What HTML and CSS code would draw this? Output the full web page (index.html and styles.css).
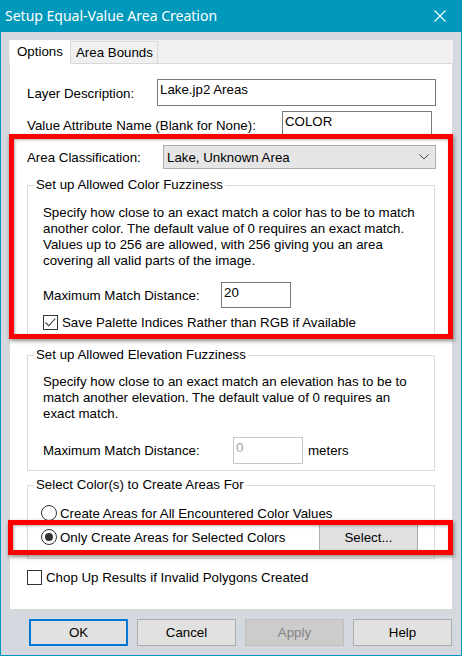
FILE: index.html
```html
<!DOCTYPE html>
<html>
<head>
<meta charset="utf-8">
<title>Setup Equal-Value Area Creation</title>
<link rel="stylesheet" href="styles.css">
</head>
<body>
<div class="window">
  <div class="titlebar">
    <span class="title">Setup Equal-Value Area Creation</span>
    <svg class="close" width="12" height="12" viewBox="0 0 12 12"><path d="M0.5 0.5 L11.5 11.5 M11.5 0.5 L0.5 11.5" stroke="#fff" stroke-width="1.1" fill="none"/></svg>
  </div>
  <div class="client">
    <div class="tabctl">
      <div class="tabs">
        <div class="tab active">Options</div>
        <div class="tab">Area Bounds</div>
      </div>
      <div class="panel">
        <div class="row r1"><span class="lbl l1">Layer Description:</span><div class="field f1">Lake.jp2 Areas</div></div>
        <div class="row r2"><span class="lbl l2">Value Attribute Name (Blank for None):</span><div class="field f2">COLOR</div></div>
        <div class="row r3"><span class="lbl l3">Area Classification:</span>
          <div class="combo"><span>Lake, Unknown Area</span>
            <svg class="chev" width="10" height="6" viewBox="0 0 10 6"><path d="M0.5 0.5 L5 5 L9.5 0.5" stroke="#444" stroke-width="1" fill="none"/></svg>
          </div>
        </div>

        <fieldset class="grp g1">
          <legend>Set up Allowed Color Fuzziness</legend>
          <div class="gbody b1">
            <p class="desc">Specify how close to an exact match a color has to be to match<br>another color. The default value of 0 requires an exact match.<br>Values up to 256 are allowed, with 256 giving you an area<br>covering all valid parts of the image.</p>
            <div class="mmrow mm1"><span class="mmlbl ml1">Maximum Match Distance:</span><div class="field fm1">20</div></div>
            <div class="chkrow c1">
              <svg class="chk" width="15" height="15" viewBox="0 0 15 15"><rect x="0.5" y="0.5" width="14" height="14" fill="#fff" stroke="#333"/><path d="M2.5 7.5 L5.8 10.8 L12.3 3.5" stroke="#333" stroke-width="1.1" fill="none"/></svg>
              <span>Save Palette Indices Rather than RGB if Available</span>
            </div>
          </div>
        </fieldset>

        <fieldset class="grp g2">
          <legend>Set up Allowed Elevation Fuzziness</legend>
          <div class="gbody b2">
            <p class="desc">Specify how close to an exact match an elevation has to be to<br>match another elevation. The default value of 0 requires an<br>exact match.</p>
            <div class="mmrow mm2"><span class="mmlbl ml2">Maximum Match Distance:</span><div class="field fm2 disabled">0</div><span class="unit">meters</span></div>
          </div>
        </fieldset>

        <fieldset class="grp g3">
          <legend>Select Color(s) to Create Areas For</legend>
          <div class="gbody b3">
            <div class="radrow rr1">
              <svg class="rad" width="16" height="16" viewBox="0 0 16 16"><circle cx="8" cy="8" r="7.5" fill="#fff" stroke="#333"/></svg>
              <span>Create Areas for All Encountered Color Values</span>
            </div>
            <div class="radrow rr2">
              <svg class="rad" width="16" height="16" viewBox="0 0 16 16"><circle cx="8" cy="8" r="7.5" fill="#fff" stroke="#333"/><circle cx="8" cy="8" r="4" fill="#333"/></svg>
              <span>Only Create Areas for Selected Colors</span>
              <div class="btn selbtn">Select...</div>
            </div>
          </div>
        </fieldset>

        <div class="chkrow c2">
          <svg class="chk" width="15" height="15" viewBox="0 0 15 15"><rect x="0.5" y="0.5" width="14" height="14" fill="#fff" stroke="#333"/></svg>
          <span>Chop Up Results if Invalid Polygons Created</span>
        </div>
      </div>
    </div>
    <div class="buttons">
      <div class="btn default">OK</div>
      <div class="btn">Cancel</div>
      <div class="btn disabled">Apply</div>
      <div class="btn">Help</div>
    </div>
  </div>
  <div class="mark m1"></div>
  <div class="mark m2"></div>
</div>
</body>
</html>
```

FILE: styles.css
```css
* { box-sizing: border-box; }
html, body { margin: 0; padding: 0; }
body {
  width: 462px;
  height: 656px;
  overflow: hidden;
  font-family: "Liberation Sans", Arial, sans-serif;
  font-size: 13.3px;
  color: #000;
  background: #d4d8df;
}
.window {
  position: relative;
  width: 462px;
  height: 656px;
  border: 1px solid #0099bc;
  border-top: 0;
  background: #d4d8df;
  display: flex;
  flex-direction: column;
}
.titlebar {
  height: 32px;
  flex: none;
  background: #0099bc;
  color: #fff;
  display: flex;
  align-items: center;
  justify-content: space-between;
  padding: 0 15px 0 4px;
  font-family: "Noto Sans", "Open Sans", sans-serif;
  font-size: 14px;
}
.title { line-height: 20px; }
.close { display: block; }
.client {
  flex: 1;
  display: flex;
  flex-direction: column;
  padding: 8px 8px 9px 8px;
}
.tabctl {
  height: 570px;
  flex: none;
  background: #f0f0f0;
  display: flex;
  flex-direction: column;
}
.tabs {
  height: 23px;
  flex: none;
  display: flex;
  align-items: flex-end;
  padding-left: 1px;
}
.tab {
  height: 22px;
  padding: 0 4px 0 5px;
  border: 1px solid #d9d9d9;
  border-bottom: 0;
  background: #f0f0f0;
  display: flex;
  align-items: center;
  line-height: 15px;
}
.tab.active {
  height: 24px;
  width: 60px;
  padding: 0 0 2px 7px;
  border: 0;
  background: #fff;
  margin-bottom: -1px;
  position: relative;
  z-index: 1;
}
.panel {
  flex: 1;
  background: #fff;
  border: 1px solid #d9d9d9;
  padding-top: 15px;
}
.row {
  display: flex;
  align-items: center;
  padding-left: 17px;
}
.lbl { flex: none; line-height: 15px; padding-top: 1px; }
.l1 { width: 130px; }
.l2 { width: 255px; }
.l3 { width: 136px; }
.r2 { margin-top: 5px; }
.r3 { margin-top: 7px; }
.field {
  border: 1px solid #7a7a7a;
  background: #fff;
  padding: 2px 0 0 2px;
  line-height: 15px;
  white-space: nowrap;
}
.f1 { width: 279px; height: 27px; }
.f2 { width: 150px; height: 27px; }
.combo {
  width: 273px;
  height: 24px;
  border: 1px solid #adadad;
  background: #e5e5e5;
  display: flex;
  align-items: center;
  justify-content: space-between;
  padding: 0 6px 0 3px;
  line-height: 15px;
}
.chev { display: block; }

.grp {
  margin: 0 17px;
  padding: 0;
  border: 1px solid #dcdcdc;
  min-width: 0;
}
.grp legend {
  margin-left: 6px;
  padding: 0 2px;
  line-height: 16px;
}
.g1 { margin-top: 8px; }
.g2 { margin-top: 8px; }
.g3 { margin-top: 6px; }
.gbody { padding-left: 15px; }
.b1 { padding-top: 12px; padding-bottom: 8px; }
.b2 { padding-top: 11px; padding-bottom: 6px; }
.b3 { padding-top: 12px; padding-bottom: 8px; padding-left: 13px; padding-right: 16px; }
.desc {
  margin: 0;
  line-height: 16px;
  white-space: nowrap;
}
.mmrow { display: flex; align-items: center; }
.mmlbl { flex: none; line-height: 15px; }
.mm1 { margin-top: 13px; }
.ml1 { width: 178px; }
.fm1 { width: 70px; height: 26px; }
.mm2 { margin-top: 15px; }
.ml2 { width: 190px; }
.fm2 { width: 70px; height: 27px; }
.field.disabled { border-color: #c6c6c6; color: #a0a0a0; }
.unit { margin-left: 5px; line-height: 15px; }

.chkrow { display: flex; align-items: center; height: 15px; }
.chk { display: block; flex: none; }
.c1 { margin-top: 7px; }
.c1 .chk { margin-right: 4px; }
.c2 { margin-top: 11px; margin-left: 17px; }
.c2 .chk { margin-right: 4px; }

.radrow { display: flex; align-items: center; }
.rad { display: block; flex: none; margin-right: 3px; }
.rr1 { height: 16px; }
.rr2 { height: 26px; margin-top: 3px; }
.selbtn { margin-left: auto; width: 98px; height: 26px; }

.buttons {
  margin-top: 9px;
  height: 27px;
  flex: none;
  display: flex;
  justify-content: flex-end;
  gap: 9px;
  padding-right: 1px;
}
.btn {
  width: 99px;
  height: 27px;
  border: 1px solid #adadad;
  background: #e1e1e1;
  display: flex;
  align-items: center;
  justify-content: center;
  line-height: 15px;
}
.btn.default { border: 2px solid #0078d7; }
.btn.disabled { background: #cccccc; border-color: #bfbfbf; color: #838383; }

.mark {
  position: absolute;
  border: 5px solid #ff0000;
  box-shadow: 1px 2px 4px rgba(0, 0, 0, 0.45), inset 1px 1px 3px rgba(0, 0, 0, 0.3);
  pointer-events: none;
  z-index: 5;
}
.m1 { left: 8px; top: 134px; width: 444px; height: 205px; }
.m2 { left: 7px; top: 520px; width: 445px; height: 35px; }
```
